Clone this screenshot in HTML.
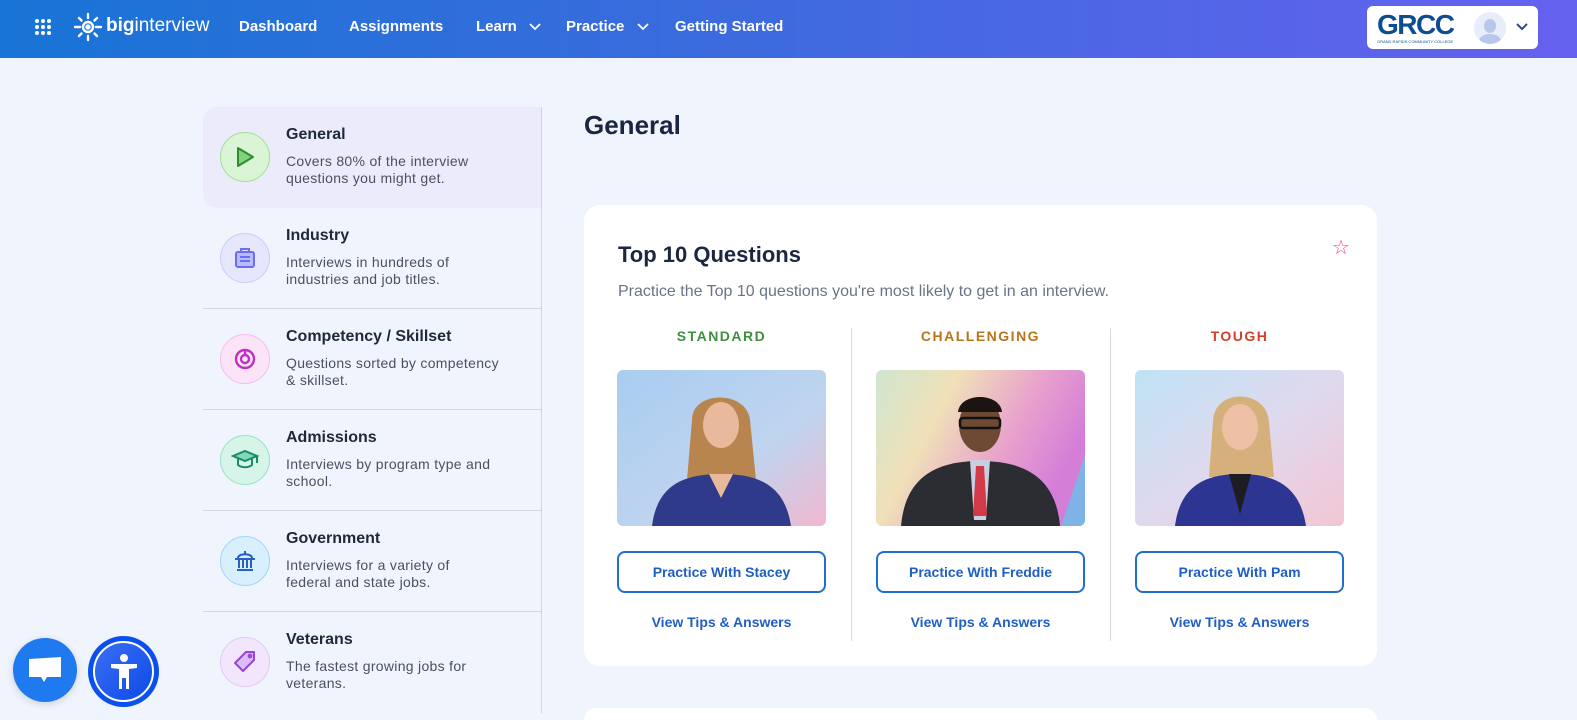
<!DOCTYPE html>
<html style="overflow:hidden;width:1577px;height:720px"><head><meta charset="utf-8">
<style>
*{box-sizing:border-box;margin:0;padding:0}
body{width:1577px;height:720px;overflow:hidden;background:#f0f4fd;font-family:"Liberation Sans",sans-serif;position:relative}
.hdr{position:absolute;left:0;top:0;width:1577px;height:58px;background:linear-gradient(90deg,#1874d6 0%,#3f6adf 50%,#6561ef 100%)}
.nav{position:absolute;top:18px;color:#fff;font-size:15px;font-weight:bold}
.side{position:absolute;left:203px;top:107px;width:339px;height:606px;border-right:1px solid #cfd3ea}
.item{position:absolute;left:0;width:338px;height:101px}
.item.act{background:#ecebfb;border-radius:14px 0 0 14px}
.item .ic{position:absolute;left:17px;top:25px;width:50px;height:50px;border-radius:50%;display:flex;align-items:center;justify-content:center}
.item h4{position:absolute;left:83px;top:19px;font-size:16px;color:#1f2937;font-weight:bold}
.item p{position:absolute;left:83px;top:46px;font-size:14px;line-height:17px;color:#4b5060;letter-spacing:.3px}
.div{position:absolute;left:0;width:338px;height:1px;background:#d4d7e6}
.card{position:absolute;left:584px;top:205px;width:793px;height:461px;background:#fff;border-radius:16px}
.col{position:absolute;top:123px;width:209px;text-align:center}
.lbl{font-size:14px;font-weight:bold;letter-spacing:1.5px;height:22px}
.img{margin-top:20px;width:209px;height:156px;border-radius:6px;overflow:hidden}
.btn{margin-top:25px;height:42px;border:2px solid #1f6fd3;border-radius:8px;color:#1f5fc4;font-size:14px;font-weight:bold;line-height:38px}
.lnk{margin-top:21px;color:#1f5fc4;font-size:14px;font-weight:bold}
.sep{position:absolute;top:123px;width:1px;height:313px;background:#d7dae6}
</style></head><body>
<div class="hdr">
  <svg style="position:absolute;left:34px;top:18px" width="18" height="18" viewBox="0 0 18 18" fill="#fff"><circle cx="3" cy="3" r="2"/><circle cx="9" cy="3" r="2"/><circle cx="15" cy="3" r="2"/><circle cx="3" cy="9" r="2"/><circle cx="9" cy="9" r="2"/><circle cx="15" cy="9" r="2"/><circle cx="3" cy="15" r="2"/><circle cx="9" cy="15" r="2"/><circle cx="15" cy="15" r="2"/></svg>
  <svg style="position:absolute;left:72px;top:12px" width="32" height="30" viewBox="0 0 32 30" stroke="#fff" stroke-width="2.4" fill="none" stroke-linecap="round"><circle cx="16" cy="15" r="5"/><circle cx="16" cy="15" r="1.5" fill="#fff"/><path d="M16 2v4M16 24v4M3 15h5M24 15h5M7 6l2.5 2.5M25 6l-2.5 2.5M7 24l2.5-2.5M25 24l-2.5-2.5"/></svg>
  <div class="nav" style="left:106px;top:15px;font-size:19px"><b>big</b><span style="font-weight:normal">interview</span></div>
  <div class="nav" style="left:239px">Dashboard</div>
  <div class="nav" style="left:349px">Assignments</div>
  <div class="nav" style="left:476px">Learn</div>
  <svg style="position:absolute;left:529px;top:23px" width="12" height="8" viewBox="0 0 12 8" fill="none" stroke="#fff" stroke-width="1.8"><path d="M1 1l5 5 5-5"/></svg>
  <div class="nav" style="left:566px">Practice</div>
  <svg style="position:absolute;left:637px;top:23px" width="12" height="8" viewBox="0 0 12 8" fill="none" stroke="#fff" stroke-width="1.8"><path d="M1 1l5 5 5-5"/></svg>
  <div class="nav" style="left:675px">Getting Started</div>
  <div style="position:absolute;left:1367px;top:6px;width:171px;height:43px;background:#fff;border-radius:6px">
    <div style="position:absolute;left:10px;top:3px;color:#0e4d92;font-size:28px;font-weight:bold;letter-spacing:-1.5px">GRCC</div>
    <div style="position:absolute;left:10px;top:33px;color:#0e4d92;font-size:4px">GRAND RAPIDS COMMUNITY COLLEGE</div>
    <div style="position:absolute;left:107px;top:6px;width:32px;height:32px;border-radius:50%;background:#e7edf9;overflow:hidden"><div style="position:absolute;left:10px;top:7px;width:12px;height:14px;border-radius:50%;background:#b8c8ea"></div><div style="position:absolute;left:5px;top:22px;width:22px;height:14px;border-radius:50%;background:#b8c8ea"></div></div>
    <svg style="position:absolute;left:149px;top:17px" width="12" height="8" viewBox="0 0 12 8" fill="none" stroke="#2b4a8a" stroke-width="2"><path d="M1 1l5 5 5-5"/></svg>
  </div>
</div>

<div class="side">
  <div class="item act" style="top:0"><div class="ic" style="background:#d9f5d5;border:1.5px solid #9fe095"><svg width="22" height="24" viewBox="0 0 22 24"><path d="M4 3l15 9-15 9z" fill="#7fd37a" stroke="#2e8b2e" stroke-width="2" stroke-linejoin="round"/></svg></div><h4>General</h4><p>Covers 80% of the interview<br>questions you might get.</p></div>
  <div class="item" style="top:101px"><div class="ic" style="background:#e6e7fc;border:1.5px solid #c9ccf8"><svg width="26" height="26" viewBox="0 0 26 26" fill="none" stroke="#6a6ef0" stroke-width="2"><rect x="4" y="7" width="18" height="15" rx="2" fill="#b9bcf8"/><path d="M9 7V4h8v3M8 12h10M8 16h10"/></svg></div><h4>Industry</h4><p>Interviews in hundreds of<br>industries and job titles.</p></div>
  <div class="div" style="top:201px"></div>
  <div class="item" style="top:202px"><div class="ic" style="background:#fbe3f8;border:1.5px solid #f3bdf0"><svg width="26" height="26" viewBox="0 0 26 26" fill="none" stroke="#c12fc4" stroke-width="2.4"><circle cx="13" cy="13" r="9"/><circle cx="13" cy="13" r="4"/><path d="M13 4v5"/></svg></div><h4>Competency / Skillset</h4><p>Questions sorted by competency<br>&amp; skillset.</p></div>
  <div class="div" style="top:302px"></div>
  <div class="item" style="top:303px"><div class="ic" style="background:#d6f4e8;border:1.5px solid #98e0c3"><svg width="28" height="26" viewBox="0 0 28 26" fill="none" stroke="#1a8a6a" stroke-width="2"><path d="M2 9l12-5 12 5-12 5z" fill="#7fd9b5"/><path d="M7 12v6c4 3 10 3 14 0v-6M26 9v7"/></svg></div><h4>Admissions</h4><p>Interviews by program type and<br>school.</p></div>
  <div class="div" style="top:403px"></div>
  <div class="item" style="top:404px"><div class="ic" style="background:#d8effd;border:1.5px solid #9fd6f6"><svg width="26" height="26" viewBox="0 0 26 26" fill="none" stroke="#2a5fc9" stroke-width="2"><path d="M3 11h20M5 22h16M7 12v8M11 12v8M15 12v8M19 12v8M6 10c0-5 14-5 14 0M13 3v3"/></svg></div><h4>Government</h4><p>Interviews for a variety of<br>federal and state jobs.</p></div>
  <div class="div" style="top:504px"></div>
  <div class="item" style="top:505px"><div class="ic" style="background:#f2e6fc;border:1.5px solid #e2c8f8"><svg width="26" height="26" viewBox="0 0 26 26" fill="#d9bff6" stroke="#9b45d6" stroke-width="2" stroke-linejoin="round"><path d="M14 3h8v8L11 22 3 14z"/><circle cx="18" cy="7" r="1.4" fill="none"/></svg></div><h4>Veterans</h4><p>The fastest growing jobs for<br>veterans.</p></div>
</div>

<div style="position:absolute;left:584px;top:110px;font-size:26px;font-weight:bold;color:#1b2740">General</div>

<div class="card">
  <div style="position:absolute;left:34px;top:37px;font-size:22px;font-weight:bold;color:#1b2740">Top 10 Questions</div>
  <div style="position:absolute;left:748px;top:30px;color:#ec407a;font-size:20px">&#9734;</div>
  <div style="position:absolute;left:34px;top:78px;font-size:16px;color:#6b7386">Practice the Top 10 questions you're most likely to get in an interview.</div>
  <div class="sep" style="left:267px"></div><div class="sep" style="left:526px"></div>
  <div class="col" style="left:33px"><div class="lbl" style="color:#3f8f3f">STANDARD</div>
    <div class="img"><svg width="209" height="156" viewBox="0 0 209 156"><defs><linearGradient id="g1" x1="0" y1="0" x2="1" y2="1"><stop offset="0" stop-color="#a9cdf0"/><stop offset=".6" stop-color="#bfd4ef"/><stop offset="1" stop-color="#f0b8cf"/></linearGradient></defs><rect width="209" height="156" fill="url(#g1)"/><path d="M75 50c0-30 55-30 58 0l6 60H70z" fill="#b9854f"/><ellipse cx="104" cy="55" rx="18" ry="23" fill="#e9b99c"/><path d="M35 156c5-40 30-52 69-52s64 12 70 52z" fill="#2f3a8a"/><path d="M92 104l12 24 12-24z" fill="#e9b99c"/></svg></div>
    <div class="btn">Practice With Stacey</div><div class="lnk">View Tips &amp; Answers</div></div>
  <div class="col" style="left:292px"><div class="lbl" style="color:#b9741a">CHALLENGING</div>
    <div class="img"><svg width="209" height="156" viewBox="0 0 209 156"><defs><linearGradient id="g2" x1="0" y1="0" x2="1" y2=".4"><stop offset="0" stop-color="#cfe6d0"/><stop offset=".35" stop-color="#f0e0b8"/><stop offset=".7" stop-color="#e8a2cc"/><stop offset="1" stop-color="#d47ed8"/></linearGradient></defs><rect width="209" height="156" fill="url(#g2)"/><path d="M185 156L209 85v71z" fill="#7fb3e6"/><ellipse cx="104" cy="55" rx="21" ry="27" fill="#6e4a35"/><path d="M82 42c2-20 42-20 44 0z" fill="#1b1410"/><rect x="84" y="48" width="40" height="10" rx="3" fill="none" stroke="#111" stroke-width="2.5"/><path d="M25 156c4-45 30-65 79-65s76 20 80 65z" fill="#2c2c33"/><path d="M94 90h20l-4 60h-12z" fill="#c9cfe0"/><path d="M100 96h8l3 50h-14z" fill="#d23a48"/></svg></div>
    <div class="btn">Practice With Freddie</div><div class="lnk">View Tips &amp; Answers</div></div>
  <div class="col" style="left:551px"><div class="lbl" style="color:#d2412a">TOUGH</div>
    <div class="img"><svg width="209" height="156" viewBox="0 0 209 156"><defs><linearGradient id="g3" x1="0" y1="0" x2="1" y2="1"><stop offset="0" stop-color="#bfe3f5"/><stop offset=".5" stop-color="#dfd9ee"/><stop offset="1" stop-color="#f2c6d4"/></linearGradient></defs><rect width="209" height="156" fill="url(#g3)"/><path d="M78 52c0-34 54-34 56 0l5 55H74z" fill="#d6b07a"/><ellipse cx="105" cy="57" rx="18" ry="23" fill="#eec0a5"/><path d="M40 156c5-40 30-52 65-52s60 12 66 52z" fill="#2d3592"/><path d="M94 104l11 40 11-40z" fill="#1c1c22"/></svg></div>
    <div class="btn">Practice With Pam</div><div class="lnk">View Tips &amp; Answers</div></div>
</div>
<div style="position:absolute;left:584px;top:708px;width:793px;height:12px;background:#fff;border-radius:16px 16px 0 0"></div>

<div style="position:absolute;left:13px;top:638px;width:64px;height:64px;border-radius:50%;background:#1f7af0;box-shadow:0 2px 8px rgba(0,0,0,.15)"><svg style="position:absolute;left:14px;top:17px" width="36" height="30" viewBox="0 0 36 30" fill="#fff"><path d="M2 4l32-2v20H20l-3 5-3-5H2z"/></svg></div>
<div style="position:absolute;left:88px;top:636px;width:71px;height:71px;border-radius:50%;background:#0a4ff0;"><div style="position:absolute;left:5px;top:5px;width:61px;height:61px;border-radius:50%;border:2px solid #fff;background:linear-gradient(135deg,#3b6ef5,#0c4be8)"><svg style="position:absolute;left:14px;top:11px" width="30" height="36" viewBox="0 0 30 36" fill="#fff"><circle cx="15" cy="4" r="4"/><path d="M2 10h26v4l-8 1v20h-3v-11h-4v11h-3V15l-8-1z"/></svg></div></div>
</body></html>
